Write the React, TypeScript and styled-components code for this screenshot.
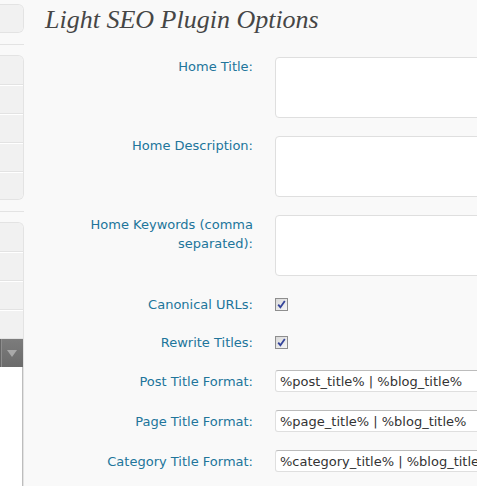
import React from "react";
import styled, {createGlobalStyle} from "styled-components";

const GlobalStyle = createGlobalStyle`
  html, body {
    margin: 0;
    padding: 0;
    background: #f9f9f9;
    overflow: hidden;
  }

  body {
    font-family: "DejaVu Sans", Verdana, sans-serif;
  }
`;

const Layout = styled.div`
  display: flex;
  height: 100vh;
  overflow: hidden;
`;

const Sidebar = styled.div`
  width: 24px;
  flex-shrink: 0;
  display: flex;
  flex-direction: column;
  padding-top: 4px;
  box-sizing: border-box;
`;

const MenuGroup = styled.div<{ open?: boolean }>`
  display: flex;
  flex-direction: column;
  border: 1px solid #e3e3e3;
  border-left: none;
  border-radius: ${p => (p.open ? "0 6px 0 0" : "0 6px 6px 0")};
  border-bottom: ${p => (p.open ? "none" : "1px solid #e3e3e3")};
  overflow: hidden;
  flex: ${p => (p.open ? 1 : "none")};
`;

const MenuItem = styled.div`
  height: 29px;
  box-sizing: border-box;
  background: #f1f1f1;
  border-top: 1px solid #fff;
  border-bottom: 1px solid #e3e3e3;

  &:first-child {
    border-top: none;
  }

  &:last-child {
    height: 27px;
    border-bottom: none;
  }
`;

const MenuSeparator = styled.div`
  height: 1px;
  background: #e3e3e3;
  margin: 11px 0 10px;
`;

const MenuHead = styled.div`
  height: 28px;
  display: flex;
  align-items: center;
  justify-content: center;
  background: linear-gradient(to right, #666 0 1px, #8d8d8d 1px 2px, transparent 2px),
  linear-gradient(#7c7c7c, #6b6b6b);
`;

const Arrow = styled.span`
  width: 0;
  height: 0;
  margin-left: 1px;
  border-left: 5px solid transparent;
  border-right: 5px solid transparent;
  border-top: 7px solid #a9a9a9;
`;

const Submenu = styled.div`
  flex: 1;
  background: #fff;
  border-right: 1px solid #bdbdbd;
`;

const Main = styled.div`
  flex: 1;
  min-width: 0;
  padding-left: 21px;
`;

const Title = styled.h2`
  margin: 0 0 14px;
  padding-top: 5px;
  font-family: "Liberation Serif", Georgia, serif;
  font-style: italic;
  font-weight: normal;
  font-size: 26px;
  line-height: 29px;
  color: #464646;
  white-space: nowrap;
`;

const Form = styled.div`
  display: flex;
  flex-direction: column;
`;

const Row = styled.div<{ top?: boolean }>`
  display: flex;
  align-items: ${p => (p.top ? "flex-start" : "center")};
  padding: 9px 0;
`;

const Label = styled.div`
  width: 198px;
  flex-shrink: 0;
  padding: 0 10px;
  text-align: right;
  font-size: 13px;
  line-height: 19px;
  color: #21759b;
`;

const Field = styled.div`
  display: flex;
  align-items: center;
  min-height: 20px;
  padding-left: 12px;
`;

const TextArea = styled.textarea`
  width: 520px;
  height: 61px;
  box-sizing: border-box;
  margin: 0;
  border: 1px solid #dfdfdf;
  border-radius: 4px;
  background: #fff;
  resize: none;
  font-family: "DejaVu Sans", sans-serif;
  font-size: 13px;
`;

const TextInput = styled.input`
  width: 520px;
  height: 22px;
  box-sizing: border-box;
  margin: 0;
  padding: 0 4px;
  border: 1px solid #dfdfdf;
  border-top-color: #bcbcbc;
  border-radius: 3px;
  background: #fff;
  font-family: "DejaVu Sans", sans-serif;
  font-size: 13px;
  color: #333;
  outline: none;
`;

const CheckBox = styled.span`
  width: 13px;
  height: 13px;
  box-sizing: border-box;
  border: 1px solid #8e8e8e;
  background: linear-gradient(135deg, #d9d9d9, #f6f6f6);
  display: flex;
  align-items: center;
  justify-content: center;
`;

const Check = () => (
    <svg width="9" height="9" viewBox="0 0 9 9">
        <path d="M1.2 4.6 L3.4 7.2 L7.8 1" fill="none" stroke="#34449a" strokeWidth="1.8"/>
    </svg>
);

const textareas = ["Home Title:", "Home Description:", "Home Keywords (comma separated):"];
const checks = ["Canonical URLs:", "Rewrite Titles:"];
const formats = [
    {label: "Post Title Format:", value: "%post_title% | %blog_title%"},
    {label: "Page Title Format:", value: "%page_title% | %blog_title%"},
    {label: "Category Title Format:", value: "%category_title% | %blog_title%"},
];

export default function App() {
    return (
        <>
            <GlobalStyle/>
            <Layout>
                <Sidebar>
                    <MenuGroup>
                        <MenuItem/>
                    </MenuGroup>
                    <MenuSeparator/>
                    <MenuGroup>
                        <MenuItem/>
                        <MenuItem/>
                        <MenuItem/>
                        <MenuItem/>
                        <MenuItem/>
                    </MenuGroup>
                    <MenuSeparator/>
                    <MenuGroup open>
                        <MenuItem/>
                        <MenuItem/>
                        <MenuItem/>
                        <MenuItem/>
                        <MenuHead>
                            <Arrow/>
                        </MenuHead>
                        <Submenu/>
                    </MenuGroup>
                </Sidebar>
                <Main>
                    <Title>Light SEO Plugin Options</Title>
                    <Form>
                        {textareas.map(label => (
                            <Row top key={label}>
                                <Label>{label}</Label>
                                <Field>
                                    <TextArea/>
                                </Field>
                            </Row>
                        ))}
                        {checks.map(label => (
                            <Row key={label}>
                                <Label>{label}</Label>
                                <Field>
                                    <CheckBox><Check/></CheckBox>
                                </Field>
                            </Row>
                        ))}
                        {formats.map(f => (
                            <Row key={f.label}>
                                <Label>{f.label}</Label>
                                <Field>
                                    <TextInput defaultValue={f.value}/>
                                </Field>
                            </Row>
                        ))}
                    </Form>
                </Main>
            </Layout>
        </>
    );
}
